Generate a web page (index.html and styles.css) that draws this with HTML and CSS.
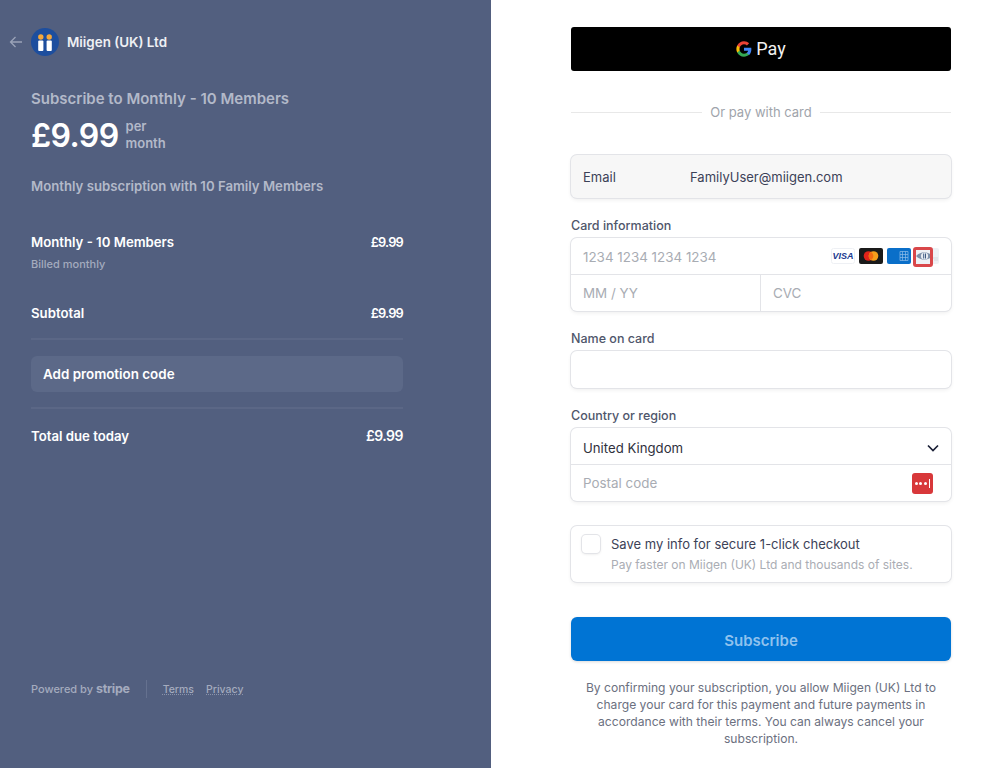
FILE: index.html
```html
<!DOCTYPE html>
<html lang="en">
<head>
<meta charset="utf-8">
<title>Checkout</title>
<link rel="stylesheet" href="styles.css">
</head>
<body>
<div class="page">
  <aside class="summary">
    <header class="brand">
      <svg class="back" width="14" height="12" viewBox="0 0 14 12"><path d="M13 6H1.500M6.500 1 1.500 6l5 5" fill="none" stroke="#9aa3b8" stroke-width="1.300"/></svg>
      <svg class="logo" width="28" height="28" viewBox="0 0 28 28"><circle cx="14" cy="14" r="14" fill="#1d4e9e"/><circle cx="9.800" cy="9" r="2.700" fill="#f5a83c"/><circle cx="18.200" cy="9" r="2.700" fill="#f5a83c"/><rect x="7.200" y="12.500" width="5.200" height="10.500" rx="1" fill="#fff"/><rect x="15.600" y="12.500" width="5.200" height="10.500" rx="1" fill="#fff"/></svg>
      <span class="brand-name">Miigen (UK) Ltd</span>
    </header>
    <div class="plan-title">Subscribe to Monthly - 10 Members</div>
    <div class="price-row">
      <span class="price">£9.99</span>
      <span class="period">per<br>month</span>
    </div>
    <div class="plan-desc">Monthly subscription with 10 Family Members</div>
    <div class="line line-item">
      <span>Monthly - 10 Members</span><span class="amt">£9.99</span>
    </div>
    <div class="billed">Billed monthly</div>
    <div class="line subtotal">
      <span>Subtotal</span><span class="amt">£9.99</span>
    </div>
    <div class="promo">Add promotion code</div>
    <div class="line total">
      <span>Total due today</span><span class="total-amt">£9.99</span>
    </div>
    <footer class="foot">
      <span class="powered">Powered by <b class="stripe">stripe</b></span>
      <span class="foot-links"><a>Terms</a><a>Privacy</a></span>
    </footer>
  </aside>
  <main class="pay">
    <div class="gpay">
      <svg width="16" height="16" viewBox="0 0 48 48"><path fill="#4285F4" d="M46.100 24.500c0-1.600-.1-3.100-.4-4.500H24v9h12.400c-.5 2.900-2.200 5.300-4.600 7v5.800h7.400c4.400-4 6.900-10 6.900-17.300z"/><path fill="#34A853" d="M24 47c6.200 0 11.400-2 15.200-5.500l-7.400-5.800c-2.100 1.400-4.700 2.200-7.800 2.200-6 0-11-4-12.800-9.500H3.600v6C7.400 42 15.100 47 24 47z"/><path fill="#FBBC05" d="M11.200 28.400c-.5-1.400-.7-2.900-.7-4.400s.3-3 .7-4.400v-6H3.600C2 16.700 1 20.200 1 24s1 7.300 2.600 10.400l7.600-6z"/><path fill="#EA4335" d="M24 10.100c3.400 0 6.400 1.200 8.800 3.400l6.600-6.600C35.400 3.300 30.200 1 24 1 15.100 1 7.400 6 3.600 13.600l7.600 6C13 14.100 18 10.100 24 10.100z"/></svg>
      <span class="pay-word">Pay</span>
    </div>
    <div class="or"><span>Or pay with card</span></div>
    <div class="box email">
      <span class="email-label">Email</span>
      <span class="email-val">FamilyUser@miigen.com</span>
    </div>
    <label class="label card-label">Card information</label>
    <div class="box group">
      <div class="row card-num">
        <span class="ph">1234 1234 1234 1234</span>
        <span class="brands">
          <svg width="24" height="16" viewBox="0 0 24 16"><rect x=".5" y=".5" width="23" height="15" rx="2" fill="#fff" stroke="#eef0f4"/><text x="12" y="11.300" text-anchor="middle" class="visa">VISA</text></svg>
          <svg width="24" height="16" viewBox="0 0 24 16"><rect width="24" height="16" rx="2" fill="#1a1a1a"/><circle cx="9.500" cy="8" r="4.800" fill="#e2231a"/><circle cx="14.500" cy="8" r="4.800" fill="#f79e1b"/><path d="M12 3.900a4.800 4.800 0 0 1 0 8.200 4.800 4.800 0 0 1 0-8.200z" fill="#f26a12"/></svg>
          <svg width="24" height="16" viewBox="0 0 24 16"><rect width="24" height="16" rx="2" fill="#0a6fc9"/><path d="M13 3.500h8v9h-8zM15.500 3.500v9M18.500 3.500v9M13 6.500h8M13 9.500h8" fill="none" stroke="#8fbde8" stroke-width=".7"/></svg>
          <span class="diners">
            <svg width="24" height="16" viewBox="0 0 24 16"><rect width="24" height="16" rx="2" fill="#eef1f5"/><path d="M1 8q8-7.500 17 0-9 7.500-17 0z" fill="#7d90aa"/><circle cx="9.500" cy="8" r="3.600" fill="#e6ebf1"/><rect x="8.200" y="5.500" width="1" height="5" fill="#3f5a82"/><rect x="10" y="5.500" width="1" height="5" fill="#3f5a82"/><path d="M18 10h5M19 12h4" stroke="#d5d9df" stroke-width="1"/></svg>
            <i class="lp-ring"></i>
          </span>
        </span>
      </div>
      <div class="row split">
        <span class="cell expiry ph">MM / YY</span>
        <span class="cell cvc ph">CVC</span>
      </div>
    </div>
    <label class="label name-label">Name on card</label>
    <div class="box name-input"></div>
    <label class="label country-label">Country or region</label>
    <div class="box group">
      <div class="row country">
        <span class="val">United Kingdom</span>
        <svg width="12" height="8" viewBox="0 0 12 8"><path d="M1 1.500 6 6.500l5-5" fill="none" stroke="#1a1f36" stroke-width="1.700"/></svg>
      </div>
      <div class="row postal">
        <span class="ph">Postal code</span>
        <span class="lp-badge"><i></i><i></i><i></i><b></b></span>
      </div>
    </div>
    <div class="box save">
      <span class="check"></span>
      <div>
        <div class="save-title">Save my info for secure 1-click checkout</div>
        <div class="save-sub">Pay faster on Miigen (UK) Ltd and thousands of sites.</div>
      </div>
    </div>
    <div class="subscribe">Subscribe</div>
    <p class="legal">By confirming your subscription, you allow Miigen (UK) Ltd to charge your card for this payment and future payments in accordance with their terms. You can always cancel your subscription.</p>
  </main>
</div>
</body>
</html>
```
FILE: styles.css
```css
* { box-sizing: border-box; }
html, body { margin: 0; height: 100%; }
body { font-family: Inter, "Noto Sans", sans-serif; color: #1a1f36; background: #fff; overflow: hidden; }
.page { display: flex; height: 768px; }

.summary { width: 491px; flex: none; background: #525f7f; padding: 28px 88px 0 31px; display: flex; flex-direction: column; color: #fff; }
.brand { display: flex; align-items: center; height: 28px; margin-left: -22px; }
.back { margin-right: 8px; }
.logo { margin-right: 8px; }
.brand-name { font-size: 13.400px; font-weight: 600; color: #eef0f4; }
.plan-title { margin-top: 32px; font-size: 15px; line-height: 22px; font-weight: 600; color: #b3b9c9; }
.price-row { display: flex; align-items: center; margin-top: 2px; height: 46px; }
.price { font-size: 32px; font-weight: 600; letter-spacing: -0.600px; margin-right: 7px; }
.period { font-size: 13px; line-height: 17px; font-weight: 600; color: #b3b9c9; }
.plan-desc { margin-top: 19px; font-size: 13.200px; line-height: 18px; font-weight: 600; color: #b3b9c9; }
.line { display: flex; justify-content: space-between; font-size: 13.200px; line-height: 18px; font-weight: 600; }
.amt { letter-spacing: -0.800px; font-size: 12.800px; line-height: 17px; padding-top: 1px; }
.line-item { margin-top: 38px; }
.billed { margin-top: 5px; font-size: 11px; line-height: 16px; font-weight: 500; color: #a4abbe; }
.subtotal { margin-top: 32px; padding-bottom: 16px; border-bottom: 2px solid #5b6786; }
.promo { margin-top: 16px; height: 36px; border-radius: 6px; background: #5c6988; padding: 0 12px; font-size: 13.400px; line-height: 36px; font-weight: 600; }
.total { margin-top: 15px; padding-top: 18px; border-top: 2px solid #5b6786; }
.total-amt { font-size: 14px; letter-spacing: -0.500px; }
.foot { margin-top: auto; margin-bottom: 70px; display: flex; align-items: center; font-size: 11px; font-weight: 500; color: #a4abbe; }
.powered { padding-right: 16px; border-right: 1px solid #65718f; line-height: 18px; }
.stripe { font-size: 12.500px; font-weight: 700; letter-spacing: -0.300px; }
.foot-links { display: flex; gap: 12px; margin-left: 16px; font-size: 10.500px; }
.foot-links a { text-decoration: underline dotted #8a93ab; text-underline-offset: 1px; }

.pay { flex: 1; padding: 27px 0 0 80px; width: 517px; }
.pay > * { width: 380px; }
.gpay { height: 44px; background: #000; border-radius: 3px; display: flex; align-items: center; justify-content: center; gap: 4px; color: #f2f2f2; font-family: Roboto, sans-serif; font-size: 18px; }
.pay-word { margin-top: -1px; }
.or { margin-top: 31px; height: 20px; display: flex; align-items: center; gap: 8px; font-size: 13px; color: #a0a4ab; }
.or::before, .or::after { content: ""; flex: 1; height: 1px; background: #e8e8e8; }
.box { border-radius: 6px; background: #fff; box-shadow: 0 0 0 1px #e3e4e8, 0 2px 4px rgba(0,0,0,.07); }
.email { margin-top: 33px; height: 43px; background: #f7f7f7; display: flex; align-items: center; padding: 0 12px; font-size: 13px; color: #3c4257; }
.email-label { width: 107px; }
.label { display: block; font-size: 12.500px; line-height: 18px; font-weight: 500; color: #4f566b; }
.card-label { margin-top: 19px; margin-bottom: 3px; }
.group { height: 73px; display: flex; flex-direction: column; }
.row { height: 36px; flex: none; display: flex; align-items: center; padding: 0 12px; font-size: 13.400px; }
.row + .row { height: 37px; border-top: 1px solid #e3e4e8; }
.ph { color: #a8acb3; }
.card-num { justify-content: space-between; padding-top: 1px; }
.brands { display: flex; gap: 4px; margin-top: -1px; }
.brands svg { display: block; }
.visa { font: italic 700 9px "Liberation Sans", sans-serif; fill: #1a3a8f; }
.diners { position: relative; display: block; }
.lp-ring { position: absolute; left: -2px; top: -1px; width: 20px; height: 20px; border: 3px solid #d9474a; border-radius: 3px; }
.split { padding: 0; }
.cell { height: 100%; display: flex; align-items: center; padding: 0 12px; }
.expiry { width: 189px; flex: none; }
.cvc { flex: 1; border-left: 1px solid #e3e4e8; }
.name-label { margin-top: 19px; margin-bottom: 3px; }
.name-input { height: 37px; }
.country-label { margin-top: 19px; margin-bottom: 3px; }
.country { justify-content: space-between; padding-top: 3px; }
.val { color: #30313d; font-size: 13.200px; }
.postal { justify-content: space-between; padding-right: 18px; }
.lp-badge { width: 21px; height: 21px; background: #d8383a; border-radius: 3px; display: flex; align-items: center; justify-content: center; gap: 1.500px; }
.lp-badge i { width: 3px; height: 3px; border-radius: 50%; background: #fff; }
.lp-badge b { width: 1px; height: 9px; background: #fff; margin-left: 1px; }
.save { margin-top: 25px; height: 56px; display: flex; padding: 9px 11px; gap: 11px; }
.check { width: 18px; height: 18px; flex: none; border-radius: 4px; background: #fff; box-shadow: 0 0 0 1px #e3e4e8, 0 1px 3px rgba(0,0,0,.12); }
.save-title { font-size: 13px; line-height: 18px; color: #3c4257; }
.save-sub { margin-top: 4px; font-size: 12px; line-height: 16px; color: #aaadb4; }
.subscribe { margin-top: 35px; height: 44px; padding-top: 2px; border-radius: 6px; background: #0074d4; color: #8fc2ee; font-size: 15px; font-weight: 600; display: flex; align-items: center; justify-content: center; box-shadow: 0 1px 3px rgba(0,0,0,.15); }
.legal { margin: 18px 0 0; padding: 0 10px; text-align: center; font-size: 12.100px; line-height: 17px; color: #6b7080; }
```
